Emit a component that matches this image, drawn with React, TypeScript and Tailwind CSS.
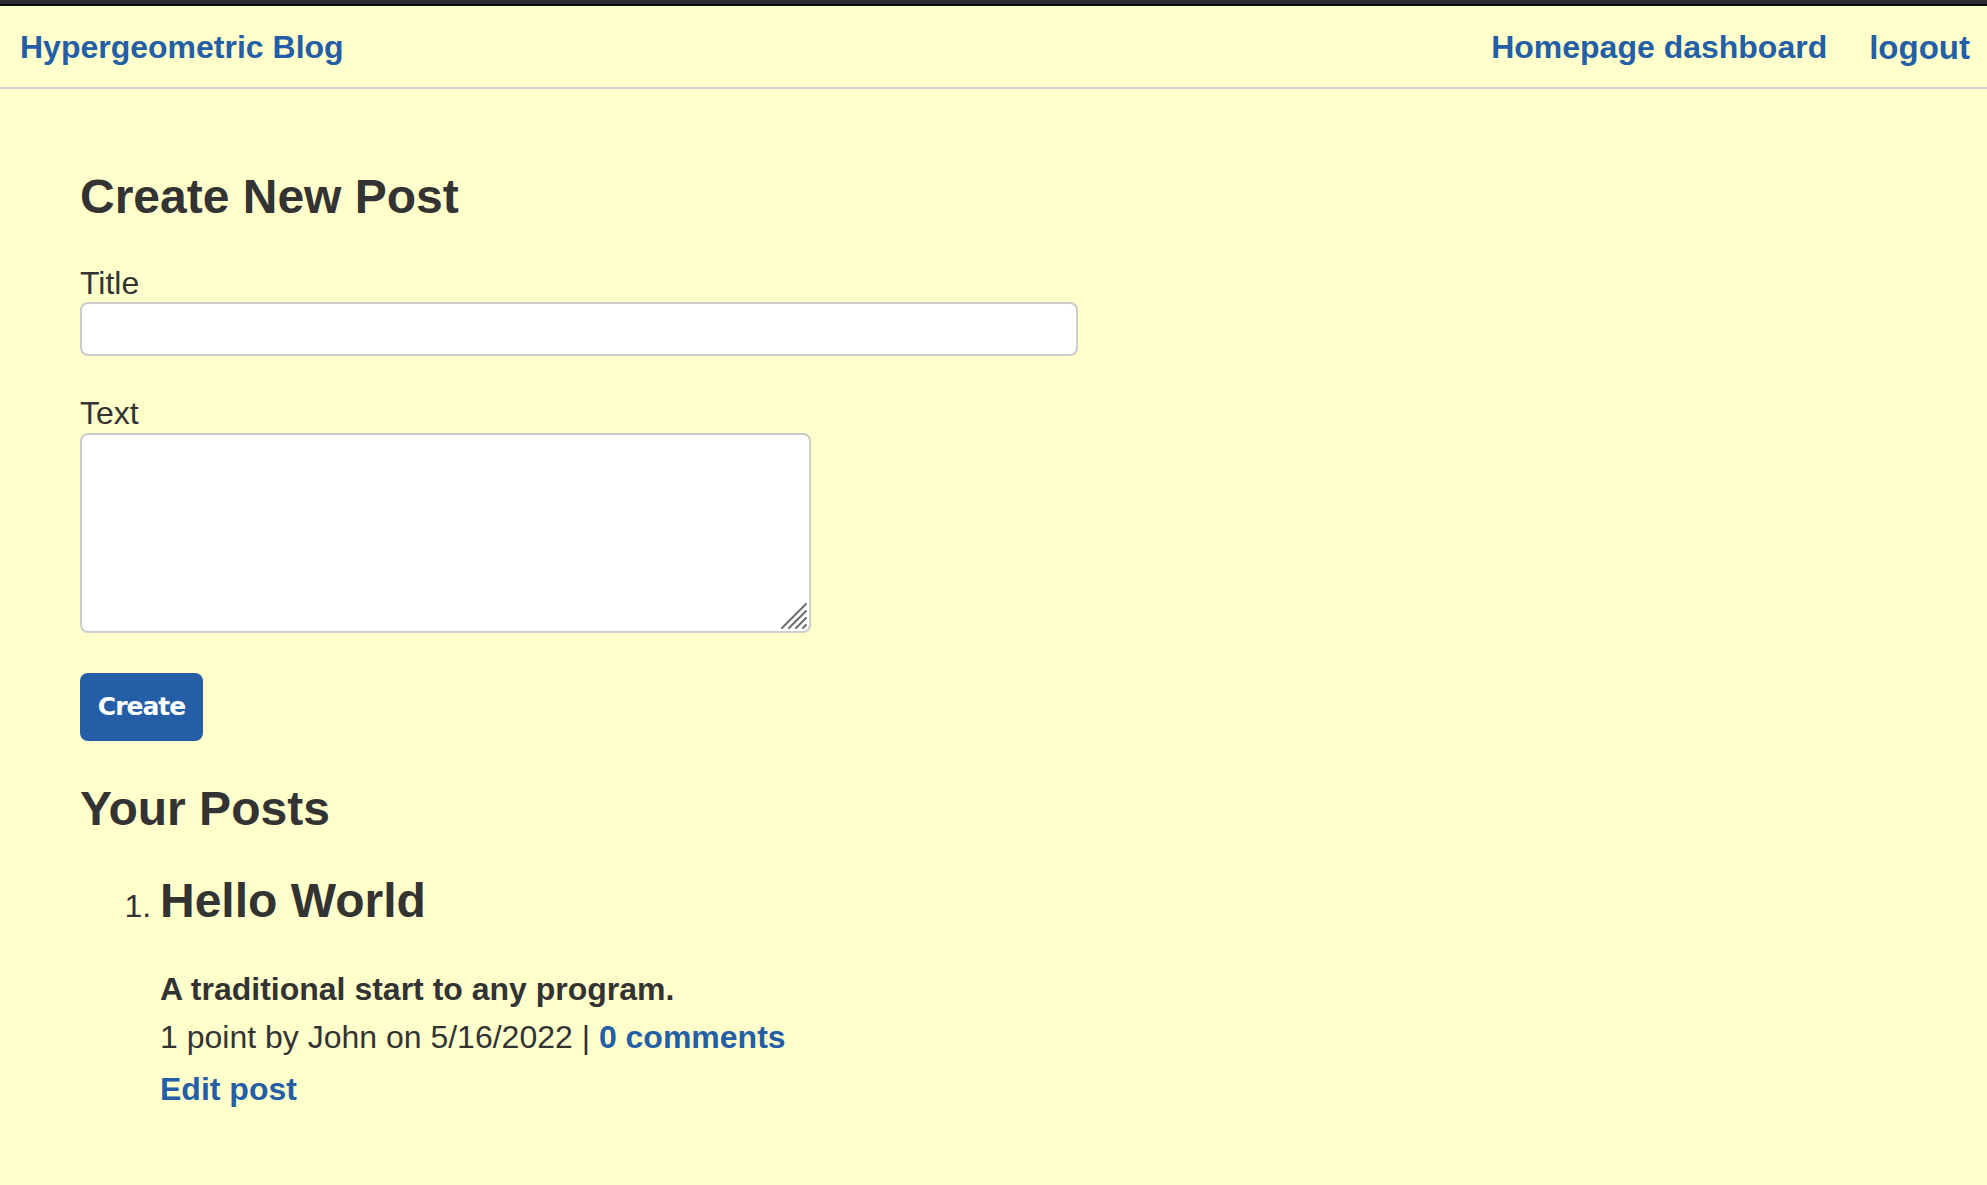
import React from 'react';

const LINK = 'text-[#235ea6] font-bold no-underline';

const NavBar: React.FC = () => {
  return (
    <header className="flex h-[83px] items-center justify-between border-b-2 border-[#cccccc] pl-5 pr-[17px] pt-[1px]">
      <a href="#" className={`${LINK} text-[32px] leading-[37px]`}>
        Hypergeometric Blog
      </a>
      <nav className="flex items-center gap-[42px]">
        <a href="#" className={`${LINK} text-[32px] leading-[37px]`}>
          Homepage dashboard
        </a>
        <a href="#" className={`${LINK} text-[33px] leading-[37px]`}>
          logout
        </a>
      </nav>
    </header>
  );
};

// the textarea grip in the reference has four diagonal strokes
const ResizeGrip: React.FC = () => (
  <svg
    className="pointer-events-none absolute bottom-[3px] right-[3px] h-[28px] w-[28px]"
    viewBox="0 0 28 28"
    fill="none"
    stroke="#6b6b6b"
    strokeWidth={2}
    strokeLinecap="round"
  >
    <path d="M2 26 L26 2" />
    <path d="M9 26 L26 9" />
    <path d="M16 26 L26 16" />
    <path d="M23 26 L26 23" />
  </svg>
);

const CreatePostForm: React.FC = () => {
  const [title, setTitle] = React.useState('');
  const [text, setText] = React.useState('');

  return (
    <form onSubmit={(e) => e.preventDefault()} className="flex flex-col items-start">
      <h2 className="m-0 text-[48px] font-bold leading-[55px] text-[#333333]">Create New Post</h2>

      <label htmlFor="title" className="mt-[41px] block text-[32px] leading-[37px] text-[#333333]">
        Title
      </label>
      <input
        id="title"
        type="text"
        value={title}
        onChange={(e) => setTitle(e.target.value)}
        className="block h-[54px] w-[998px] rounded-[8px] border-2 border-[#cccccc] bg-white px-3 text-[32px] text-[#333333] outline-none"
      />

      <label htmlFor="text" className="mt-[39px] block text-[32px] leading-[37px] text-[#333333]">
        Text
      </label>
      <div className="relative mt-px">
        <textarea
          id="text"
          value={text}
          onChange={(e) => setText(e.target.value)}
          className="block h-[200px] w-[731px] resize-none rounded-[8px] border-2 border-[#cccccc] bg-white p-3 text-[32px] text-[#333333] outline-none"
        />
        <ResizeGrip />
      </div>

      <button
        type="submit"
        className="mt-[40px] flex h-[68px] w-[123px] items-center justify-center rounded-[8px] bg-[#235ea6] text-[25px] font-bold tracking-[-1px] text-white"
        style={{ fontFamily: '"DejaVu Sans", Verdana, sans-serif' }}
      >
        Create
      </button>
    </form>
  );
};

const PostList: React.FC = () => {
  return (
    <section>
      <h2 className="mt-[40px] text-[48px] font-bold leading-[55px] text-[#333333]">Your Posts</h2>
      <ol className="mt-[37px] list-decimal pl-[80px] text-[32px] leading-[37px] text-[#333333]">
        <li>
          <h3 className="text-[48px] font-bold leading-[55px]">Hello World</h3>
          <p className="mt-[43px] font-bold">A traditional start to any program.</p>
          <p className="mt-[11px]">
            1 point by John on 5/16/2022 |{' '}
            <a href="#" className={LINK}>
              0 comments
            </a>
          </p>
          <p className="mt-[15px]">
            <a href="#" className={LINK}>
              Edit post
            </a>
          </p>
        </li>
      </ol>
    </section>
  );
};

export default function App() {
  return (
    <div
      className="min-h-[1185px] bg-[#ffffcc] text-[#333333]"
      style={{ fontFamily: '"Liberation Sans", Arial, sans-serif' }}
    >
      <div className="h-[4px] bg-[#2b2a33]" />
      <div className="h-[2px] bg-[#0c0c0d]" />
      <NavBar />
      <main className="px-[80px] pt-[80px] pb-10">
        <CreatePostForm />
        <PostList />
      </main>
    </div>
  );
}
